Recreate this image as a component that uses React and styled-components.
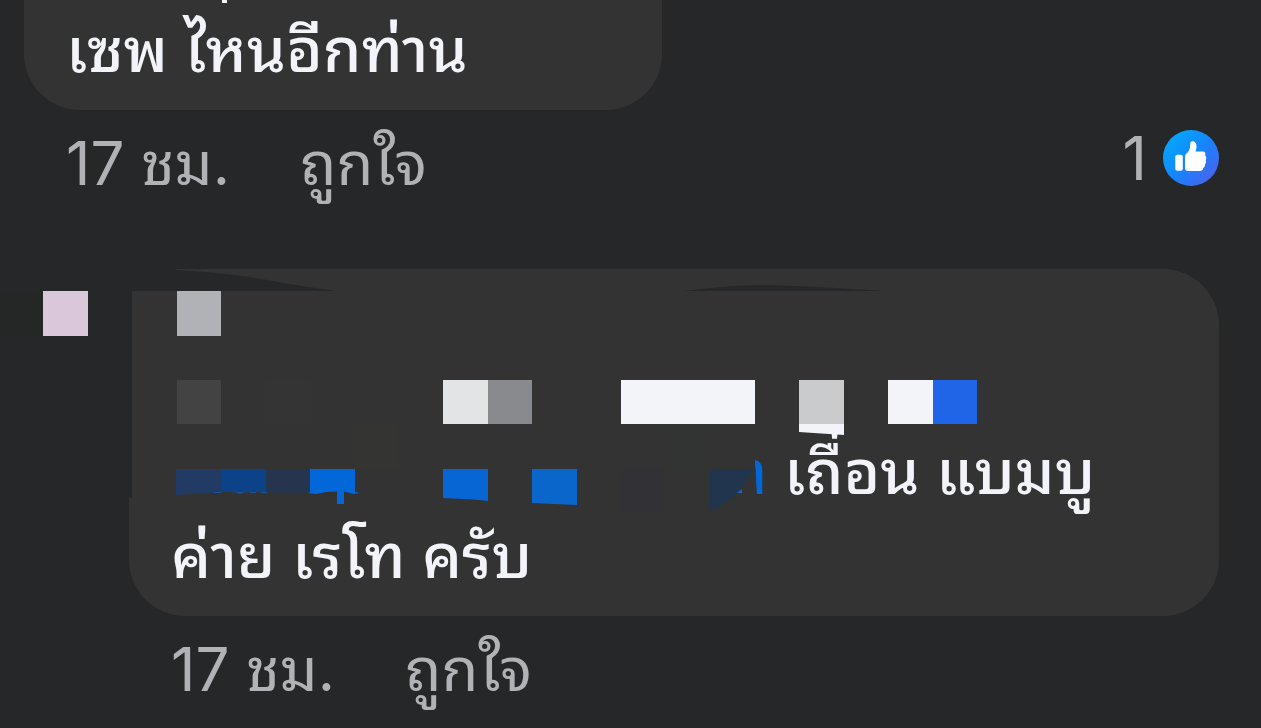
import styled, { createGlobalStyle } from "styled-components";

const mosaic = [
  { x: 0, y: 22, w: 43, h: 45, color: "#242726" },
  { x: 43, y: 22, w: 45, h: 45, color: "#dac8da" },
  { x: 177, y: 22, w: 44, h: 45, color: "#b0b2b6" },
  { x: 177, y: 111, w: 44, h: 44, color: "#434343" },
  { x: 266, y: 111, w: 44, h: 44, color: "#343434" },
  { x: 443, y: 111, w: 45, h: 44, color: "#e2e4e6" },
  { x: 488, y: 111, w: 44, h: 44, color: "#898a8e" },
  { x: 621, y: 111, w: 134, h: 44, color: "#f2f4f9" },
  { x: 799, y: 111, w: 45, h: 44, color: "#cacbcd" },
  { x: 888, y: 111, w: 45, h: 44, color: "#f2f4f9" },
  { x: 933, y: 111, w: 44, h: 44, color: "#2065e8" },
  { x: 354, y: 155, w: 45, h: 45, color: "#343432" },
  { x: 665, y: 155, w: 45, h: 45, color: "#323433" },
  { x: 621, y: 200, w: 44, h: 43, color: "#323236" },
];

const Mosaic = () => (
  <MosaicLayer width="1000" height="260" viewBox="0 0 1000 260" aria-hidden="true">
    <path fill="#262729" d="M128 0H176V1Q214 3 250 8L290 15L335 22H132V229H128Z" />
    <path fill="#262729" d="M684 22Q730 16 765 16Q810 17 884 22Z" />
    {mosaic.map((b) => (
      <rect key={`${b.x}-${b.y}`} x={b.x} y={b.y} width={b.w} height={b.h} fill={b.color} />
    ))}
    <path fill="#f2f4f9" d="M799 155H844V166L799 163Z" />
    <path fill="#213b64" d="M176 200H221V223L176 226Z" />
    <path fill="#0c4388" d="M221 200H266V223H221Z" />
    <path fill="#26344e" d="M266 200H310V223L290 225L266 223Z" />
    <path
      fill="#0267d8"
      d="M310 200H355V223L360 224L354 225L344 222.500V235H337V222.500L326 223L316 225L308 224L310 223Z"
    />
    <path fill="#1b5396" d="M214 223H221V224H214ZM234 223H246L240 225ZM250 223H256V224H250ZM260 223H267V224H262Z" />
    <path fill="#0766d4" d="M443 200H488V232L474 230.500L443 229Z" />
    <path fill="#0b66cc" d="M532 200H577V236L532 234Z" />
    <path fill="#333333" d="M725 182H755V196L757 226H725Z" />
    <path fill="#22354e" d="M710 200H754Q744 219 732 229Q722 237 710 241Z" />
    <path fill="#1f65b5" d="M737 224L742 220V224Z" />
  </MosaicLayer>
);

const LikeBadge = () => (
  <svg width="56" height="56" viewBox="0 0 56 56" aria-hidden="true">
    <defs>
      <linearGradient id="like" x1="0.1" y1="0.2" x2="0.85" y2="0.9">
        <stop offset="0" stopColor="#04a5fd" />
        <stop offset="0.5" stopColor="#1784fc" />
        <stop offset="1" stopColor="#4764ee" />
      </linearGradient>
    </defs>
    <circle cx="28" cy="28" r="28" fill="url(#like)" />
    <rect x="12.300" y="24.800" width="7.500" height="16" rx="2" fill="#fff" />
    <path
      fill="#fff"
      d="M22 27C22 25 23 24 24.500 22.500C26.500 20.500 27 18.500 27.200 14.500C27.300 11.500 28.500 11 30 11.300C33 12 34 15 33.300 18.500L32.500 21.500H39.500C42 21.500 43 23.500 42 25.300C43.500 26.500 43.700 28.500 42.700 30C43.500 31.500 43 33.300 42 34.300C42.300 36 41.500 37.200 40.300 38C40 40.200 38.700 41 36.500 41H25C23 41 22 40 22 38Z"
    />
  </svg>
);

const App = () => {
  return (
    <>
      <GlobalStyle />
      <Thread>
        <Comment>
          <Bubble $first>
            <Descender width="5" height="3" viewBox="0 0 5 3" aria-hidden="true">
              <rect width="5" height="3" fill="#f2f4f9" />
            </Descender>
            <Line>เซพ ไหนอีกท่าน</Line>
          </Bubble>
          <Meta>
            <Time>17 ชม.</Time>
            <LikeButton type="button">ถูกใจ</LikeButton>
            <Reactions>
              <span>1</span>
              <LikeBadge />
            </Reactions>
          </Meta>
        </Comment>
        <Comment $reply>
          <Bubble>
            <Line $indent>
              <a href="#profile">า</a> เถื่อน แบมบู
            </Line>
            <Line>ค่าย เรโท ครับ</Line>
          </Bubble>
          <Mosaic />
          <Meta>
            <Time>17 ชม.</Time>
            <LikeButton type="button">ถูกใจ</LikeButton>
          </Meta>
        </Comment>
      </Thread>
    </>
  );
};

export default App;

const GlobalStyle = createGlobalStyle`
  * {
    box-sizing: border-box;
  }
  body {
    margin: 0;
    background: #262729;
    overflow: hidden;
  }
`;

const Thread = styled.main`
  display: flex;
  flex-direction: column;
  gap: 48px;
  font-family: Inter, "Noto Sans Thai Looped", "Noto Looped Thai", Sarabun, Loma,
    Garuda, Waree, "Noto Sans Thai", "Noto Sans", sans-serif;
  color: #f2f4f9;
`;

const Comment = styled.article`
  position: relative;
  padding-left: ${(p) => (p.$reply ? 129 : 24)}px;
  padding-right: 42px;
`;

const Bubble = styled.div`
  position: relative;
  background: #333333;
  max-width: ${(p) => (p.$first ? "638px" : "none")};
  border-radius: ${(p) => (p.$first ? "0 0 56px 56px" : "0 56px 56px 56px")};
  padding: ${(p) => (p.$first ? "8px 42px 18px" : "161px 42px 18px")};
`;

const Descender = styled.svg`
  position: absolute;
  top: 0;
  left: 198px;
`;

const Line = styled.p`
  margin: 0;
  padding-left: ${(p) => (p.$indent ? 570 : 0)}px;
  font-size: 62px;
  font-weight: 500;
  line-height: 84px;
  white-space: nowrap;

  a {
    color: #0267d8;
    text-decoration: none;
  }
`;

const Meta = styled.div`
  display: flex;
  align-items: center;
  height: 111px;
  padding-left: 42px;
  padding-bottom: 6px;
  font-size: 60px;
  line-height: 84px;
  color: #b0b2b6;
`;

const Time = styled.span`
  white-space: nowrap;
`;

const LikeButton = styled.button`
  margin-left: 70px;
  padding: 0;
  border: 0;
  background: none;
  color: inherit;
  font: inherit;
  cursor: pointer;
`;

const Reactions = styled.div`
  display: flex;
  align-items: center;
  align-self: flex-start;
  gap: 16px;
  height: 96px;
  margin-left: auto;
`;

const MosaicLayer = styled.svg`
  position: absolute;
  top: 0;
  left: 0;
  pointer-events: none;
`;
